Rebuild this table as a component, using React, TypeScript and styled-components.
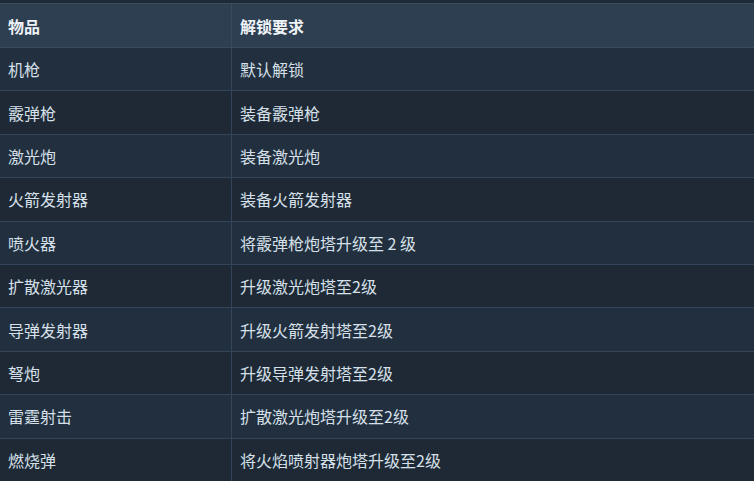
import React from "react";
import styled, { createGlobalStyle } from "styled-components";

const GlobalStyle = createGlobalStyle`
  html, body {
    margin: 0;
    padding: 0;
    background-color: #1f2a37;
  }
  body {
    font-family: "Noto Sans CJK SC", "Noto Sans", sans-serif;
  }
`;

const Page = styled.div`
  width: 754px;
  height: 481px;
  overflow: hidden;
  padding-top: 3px;
  box-sizing: border-box;
`;

const Table = styled.table`
  width: 100%;
  border-collapse: collapse;
  table-layout: fixed;
  font-size: 16px;
`;

const HeadCell = styled.th`
  height: 43px;
  padding: 0 8px;
  text-align: left;
  font-weight: 700;
  color: #eef3f8;
  background-color: #2e3f51;
  border-top: 1px solid #3a4b5e;
  border-bottom: 1px solid #3a4b5e;
  border-right: 1px solid #3a4b5e;
  &:first-child {
    width: 215px;
  }
  &:last-child {
    border-right: none;
  }
`;

const Row = styled.tr<{ $odd: boolean }>`
  background-color: ${({ $odd }) => ($odd ? "#222f3e" : "#1e2935")};
`;

const Cell = styled.td`
  height: 42.4px;
  padding: 0 8px;
  color: #d6e0ea;
  border-bottom: 1px solid #34455a;
  border-right: 1px solid #34455a;
  white-space: nowrap;
  &:last-child {
    border-right: none;
  }
`;

const rows: [string, string][] = [
  ["机枪", "默认解锁"],
  ["霰弹枪", "装备霰弹枪"],
  ["激光炮", "装备激光炮"],
  ["火箭发射器", "装备火箭发射器"],
  ["喷火器", "将霰弹枪炮塔升级至 2 级"],
  ["扩散激光器", "升级激光炮塔至2级"],
  ["导弹发射器", "升级火箭发射塔至2级"],
  ["弩炮", "升级导弹发射塔至2级"],
  ["雷霆射击", "扩散激光炮塔升级至2级"],
  ["燃烧弹", "将火焰喷射器炮塔升级至2级"],
];

export default function App() {
  return (
    <Page>
      <GlobalStyle />
      <Table>
        <thead>
          <tr>
            <HeadCell>物品</HeadCell>
            <HeadCell>解锁要求</HeadCell>
          </tr>
        </thead>
        <tbody>
          {rows.map(([item, req], i) => (
            <Row key={item} $odd={i % 2 === 0}>
              <Cell>{item}</Cell>
              <Cell>{req}</Cell>
            </Row>
          ))}
        </tbody>
      </Table>
    </Page>
  );
}
